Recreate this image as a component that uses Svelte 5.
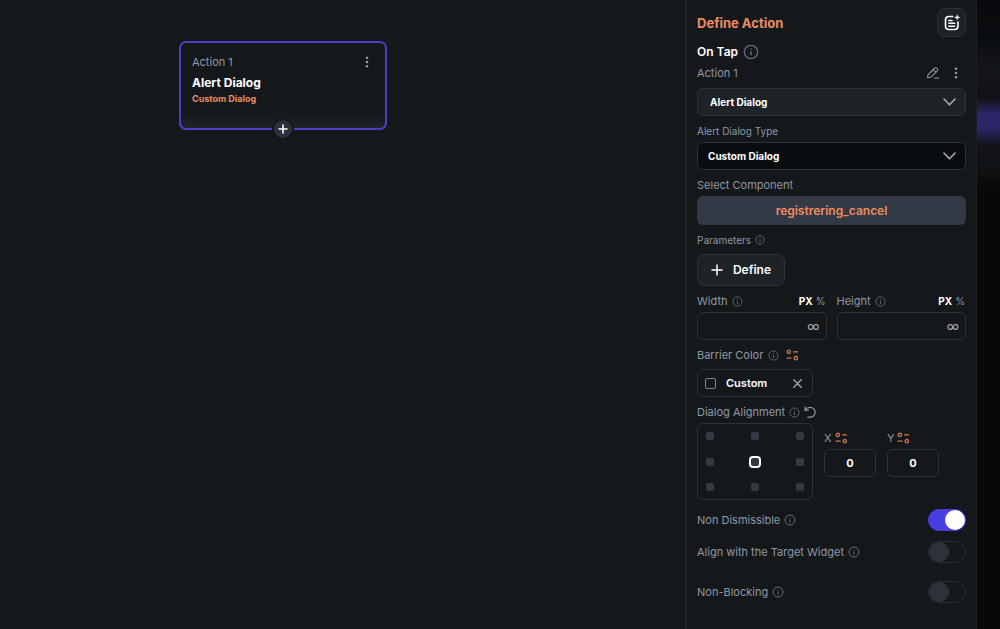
<script>
  let actionType = $state('Alert Dialog');
  let dialogType = $state('Custom Dialog');
  let alignment = $state('center');

  const positions = [
    'top left', 'top center', 'top right',
    'center left', 'center', 'center right',
    'bottom left', 'bottom center', 'bottom right'
  ];

  const sizes = [
    { id: 'width', label: 'Width' },
    { id: 'height', label: 'Height' }
  ];

  let offsets = $state([
    { id: 'x', label: 'X', value: '0' },
    { id: 'y', label: 'Y', value: '0' }
  ]);

  let toggles = $state([
    { id: 'dismiss', label: 'Non Dismissible', on: true },
    { id: 'target', label: 'Align with the Target Widget', on: false },
    { id: 'blocking', label: 'Non-Blocking', on: false }
  ]);
</script>

{#snippet info(size)}
  <svg class="info" width={size} height={size} viewBox="0 0 12 12" fill="none" stroke="currentColor" aria-hidden="true">
    <circle cx="6" cy="6" r="5" stroke-width="1" />
    <path d="M6 5.4V8.6M6 3.3V4.3" stroke-width="1.1" />
  </svg>
{/snippet}

{#snippet dots()}
  <svg width="4" height="12" viewBox="0 0 4 12" fill="currentColor" aria-hidden="true">
    <circle cx="2" cy="1.8" r="1.3" />
    <circle cx="2" cy="6" r="1.3" />
    <circle cx="2" cy="10.2" r="1.3" />
  </svg>
{/snippet}

{#snippet chevron()}
  <svg class="chevron" width="13" height="8" viewBox="0 0 13 8" fill="none" stroke="currentColor" stroke-width="1.6" stroke-linecap="round" stroke-linejoin="round" aria-hidden="true">
    <path d="M1 1L6.5 6.8L12 1" />
  </svg>
{/snippet}

{#snippet variable()}
  <button class="icon-btn variable" aria-label="Set from variable">
    <svg width="13" height="12" viewBox="0 0 13 12" fill="none" stroke="currentColor" stroke-width="1.3" aria-hidden="true">
      <circle cx="2.8" cy="2.8" r="1.7" />
      <path d="M7 2.8H12M0.6 9.2H5.6" />
      <circle cx="9.8" cy="9.2" r="1.7" />
    </svg>
  </button>
{/snippet}

<div class="editor">
  <main class="canvas">
    <div class="node">
      <div class="node-top">
        <span class="node-index">Action 1</span>
        <button class="icon-btn" aria-label="Node options">{@render dots()}</button>
      </div>
      <strong class="node-title">Alert Dialog</strong>
      <span class="node-type">Custom Dialog</span>
      <button class="add" aria-label="Add action">
        <svg width="10" height="10" viewBox="0 0 10 10" stroke="currentColor" stroke-width="1.6" stroke-linecap="round" aria-hidden="true">
          <path d="M5 1V9M1 5H9" />
        </svg>
      </button>
    </div>
  </main>

  <aside class="panel">
    <header class="panel-header">
      <h1>Define Action</h1>
      <button class="note-btn" aria-label="Add note">
        <svg width="18" height="18" viewBox="0 0 18 18" fill="none" stroke="currentColor" stroke-width="1.6" stroke-linecap="round" stroke-linejoin="round" aria-hidden="true">
          <path d="M9.6 2.5H6C3.6 2.5 2.5 3.6 2.5 6V12C2.5 14.4 3.6 15.5 6 15.5H11.5C13.9 15.5 15 14.4 15 12V8" />
          <path d="M5.8 6.4H9M5.8 9.3H11.8M5.8 12.2H11.8" stroke-width="1.5" />
          <path d="M14.2 0.2L15 2.6L17.4 3.4L15 4.2L14.2 6.6L13.4 4.2L11 3.4L13.4 2.6Z" fill="currentColor" stroke="none" />
        </svg>
      </button>
    </header>

    <div class="trigger">On Tap {@render info(16)}</div>

    <div class="action-row">
      <label for="action">Action 1</label>
      <button class="icon-btn" aria-label="Rename action">
        <svg width="14" height="14" viewBox="0 0 14 14" fill="none" stroke="currentColor" stroke-width="1.1" stroke-linecap="round" stroke-linejoin="round" aria-hidden="true">
          <path d="M1.6 11.6L2 8.9L8.2 2.5C9.2 1.5 10.2 1.5 11.1 2.3C12 3.2 12 4.2 11.1 5.1L4.6 11.3Z" />
          <path d="M7.2 3.6L9.9 6.3M8.5 12H12.8" />
        </svg>
      </button>
      <button class="icon-btn" aria-label="Action options">{@render dots()}</button>
    </div>
    <div class="select raised">
      <select id="action" bind:value={actionType}>
        <option>Alert Dialog</option>
        <option>Bottom Sheet</option>
      </select>
      {@render chevron()}
    </div>

    <div class="field">
      <label class="label small" for="dialog-type">Alert Dialog Type</label>
      <div class="select sunken">
        <select id="dialog-type" bind:value={dialogType}>
          <option>Custom Dialog</option>
          <option>Informational Dialog</option>
        </select>
        {@render chevron()}
      </div>
    </div>

    <div class="field">
      <span class="label">Select Component</span>
      <button class="component">registrering_cancel</button>
    </div>

    <div class="field roomy">
      <span class="label small">Parameters {@render info(10)}</span>
      <button class="define">
        <svg width="12" height="12" viewBox="0 0 12 12" stroke="currentColor" stroke-width="1.5" stroke-linecap="round" aria-hidden="true">
          <path d="M6 1V11M1 6H11" />
        </svg>
        Define
      </button>
    </div>

    <div class="sizes">
      {#each sizes as size}
        <div class="field">
          <div class="label">
            <label for={size.id}>{size.label}</label>
            {@render info(11)}
            <span class="units">
              <button class="unit active">PX</button>
              <button class="unit">%</button>
            </span>
          </div>
          <input class="size-input" id={size.id} type="text" placeholder="∞" />
        </div>
      {/each}
    </div>

    <div class="field roomy">
      <span class="label">Barrier Color <span class="label-icons">{@render info(11)} {@render variable()}</span></span>
      <div class="color">
        <button class="color-pick"><span class="swatch"></span>Custom</button>
        <button class="icon-btn" aria-label="Clear color">
          <svg width="9" height="9" viewBox="0 0 9 9" stroke="currentColor" stroke-width="1.3" stroke-linecap="round" aria-hidden="true">
            <path d="M0.8 0.8L8.2 8.2M8.2 0.8L0.8 8.2" />
          </svg>
        </button>
      </div>
    </div>

    <div class="field">
      <span class="label">
        Dialog Alignment {@render info(11)}
        <button class="icon-btn" aria-label="Reset alignment">
          <svg width="12" height="12" viewBox="0 0 12 12" fill="none" stroke="currentColor" stroke-width="1.2" stroke-linecap="round" stroke-linejoin="round" aria-hidden="true">
            <path d="M1 0.8V4.2H4.4" />
            <path d="M1.2 4C2.4 2.2 4.2 1.4 6.2 1.4C9 1.4 11.2 3.6 11.2 6.3C11.2 9.1 9 11.2 6.2 11.2H3.8" />
          </svg>
        </button>
      </span>
      <div class="alignment">
        <div class="anchors" role="radiogroup" aria-label="Dialog Alignment">
          {#each positions as position}
            <input type="radio" name="alignment" value={position} aria-label={position} bind:group={alignment} />
          {/each}
        </div>
        {#each offsets as offset}
          <div class="field">
            <div class="label offset-label">
              <label for={offset.id}>{offset.label}</label>
              {@render variable()}
            </div>
            <input class="offset-input" id={offset.id} type="text" bind:value={offset.value} />
          </div>
        {/each}
      </div>
    </div>

    <div class="toggles">
      {#each toggles as toggle}
        <div class="toggle-row">
          <label for={toggle.id}>{toggle.label}</label>
          {@render info(12)}
          <input class="switch" id={toggle.id} type="checkbox" role="switch" bind:checked={toggle.on} />
        </div>
      {/each}
    </div>
  </aside>

  <div class="backdrop"></div>
</div>

<style>
  :global(body) {
    margin: 0;
    background: #14181b;
  }

  .editor {
    display: grid;
    grid-template-columns: 1fr 292px 23px;
    min-height: 100vh;
    background: #14181b;
    color: #8e98a6;
    font-family: Inter, "Open Sans", sans-serif;
    font-size: 11px;
    line-height: 16px;
  }

  .editor * {
    box-sizing: border-box;
  }

  button,
  input,
  select {
    margin: 0;
    padding: 0;
    border: none;
    background: none;
    color: inherit;
    font: inherit;
  }

  button,
  select {
    cursor: pointer;
  }

  svg {
    display: block;
    flex: none;
  }

  .icon-btn {
    display: flex;
    align-items: center;
  }

  .info {
    color: #626c78;
  }

  .canvas {
    position: relative;
  }

  .node {
    position: absolute;
    top: 41px;
    left: 179px;
    display: flex;
    flex-direction: column;
    width: 208px;
    height: 89px;
    padding: 11px;
    border: 2px solid #4841c4;
    border-radius: 7px;
    background: linear-gradient(#14181b 80%, #1e2429);
  }

  .node-top {
    display: flex;
    justify-content: space-between;
    align-items: center;
    padding-right: 5px;
  }

  .node-title {
    margin-top: 5px;
    color: #fff;
    font-size: 12px;
    font-weight: 700;
  }

  .node-type {
    color: #ee8b60;
    font-size: 9px;
    font-weight: 700;
  }

  .add {
    position: absolute;
    bottom: -12px;
    left: 50%;
    display: grid;
    place-items: center;
    width: 22px;
    height: 22px;
    border: 2px solid #14181b;
    border-radius: 50%;
    background: #2b323b;
    color: #fff;
    transform: translateX(-50%);
  }

  .panel {
    padding: 8px 10px 24px 10px;
    border-left: 2px solid #22272c;
    border-right: 1px solid #1b1f23;
  }

  .panel-header {
    display: flex;
    justify-content: space-between;
    align-items: center;
  }

  h1 {
    margin: 0;
    color: #ee8b60;
    font-size: 13px;
    font-weight: 700;
  }

  .note-btn {
    display: grid;
    place-items: center;
    width: 29px;
    height: 29px;
    border: 1px solid #293036;
    border-radius: 7px;
    background: #1d2327;
    color: #fff;
  }

  .trigger {
    display: flex;
    align-items: center;
    gap: 5px;
    margin-top: 5px;
    color: #fff;
    font-size: 12px;
    font-weight: 600;
    line-height: 20px;
  }

  .action-row {
    display: flex;
    align-items: center;
    gap: 14px;
    height: 22px;
    margin-bottom: 4px;
    padding-right: 8px;
  }

  .action-row label {
    flex: 1;
  }

  .select {
    display: grid;
    align-items: center;
    height: 28px;
    border: 1px solid #2b3238;
    border-radius: 6px;
    color: #a2abb6;
  }

  .select select {
    grid-area: 1 / 1;
    width: 100%;
    height: 26px;
    appearance: none;
    outline: none;
    color: #fff;
    font-size: 10px;
    font-weight: 700;
  }

  .select option {
    background: #14181b;
  }

  .chevron {
    grid-area: 1 / 1;
    justify-self: end;
    margin-right: 9px;
    pointer-events: none;
  }

  .raised {
    background: #1d2327;
  }

  .raised select {
    padding-left: 12px;
  }

  .sunken {
    background: #090d10;
  }

  .sunken select {
    padding-left: 10px;
  }

  .field {
    display: flex;
    flex-direction: column;
    gap: 3px;
    margin-top: 7px;
  }

  .roomy {
    gap: 6px;
  }

  .label {
    display: flex;
    align-items: center;
    gap: 4px;
    height: 16px;
  }

  .small {
    font-size: 10px;
  }

  .label-icons {
    display: flex;
    align-items: center;
    gap: 7px;
    margin-left: 1px;
  }

  .variable {
    color: #c97857;
  }

  .component {
    height: 29px;
    border-radius: 6px;
    background: #323a45;
    color: #ee8b60;
    font-size: 12px;
    font-weight: 600;
  }

  .define {
    display: flex;
    align-items: center;
    justify-content: center;
    align-self: flex-start;
    gap: 10px;
    width: 88px;
    height: 32px;
    border: 1px solid #2b3238;
    border-radius: 7px;
    background: #1d2327;
    color: #fff;
    font-size: 12px;
    font-weight: 600;
  }

  .sizes {
    display: grid;
    grid-template-columns: 1fr 1fr;
    gap: 10px;
  }

  .units {
    display: flex;
    gap: 3px;
    margin-left: auto;
    padding-right: 1px;
    font-size: 10px;
  }

  .active {
    color: #fff;
    font-weight: 700;
  }

  .size-input,
  .offset-input {
    height: 28px;
    border: 1px solid #2b3238;
    border-radius: 6px;
    outline: none;
  }

  .size-input {
    width: 100%;
    padding: 0 6px;
    font-size: 13px;
    text-align: right;
  }

  .size-input::placeholder {
    color: #a2abb6;
    opacity: 1;
  }

  .color {
    display: flex;
    align-items: center;
    justify-content: space-between;
    width: 116px;
    height: 28px;
    padding: 0 10px 0 7px;
    border: 1px solid #2b3238;
    border-radius: 6px;
    color: #a2abb6;
  }

  .color-pick {
    display: flex;
    align-items: center;
    gap: 10px;
    color: #fff;
    font-weight: 600;
  }

  .swatch {
    width: 11px;
    height: 11px;
    border: 1px solid #7c8590;
    border-radius: 2px;
  }

  .alignment {
    display: flex;
    align-items: flex-start;
    gap: 11px;
  }

  .anchors {
    display: grid;
    grid-template-columns: repeat(3, 8px);
    justify-content: space-between;
    align-content: space-between;
    width: 116px;
    height: 77px;
    padding: 8px;
    border: 1px solid #2b3238;
    border-radius: 6px;
  }

  .anchors input {
    width: 8px;
    height: 8px;
    appearance: none;
    border-radius: 2px;
    background: #323a45;
  }

  .anchors input:checked {
    outline: 2px solid #fff;
  }

  .offset-label {
    gap: 3px;
  }

  .offset-input {
    width: 52px;
    color: #fff;
    font-weight: 700;
    text-align: center;
  }

  .toggles {
    margin-top: 9px;
  }

  .toggle-row {
    display: flex;
    align-items: center;
    gap: 4px;
    height: 22px;
    margin-bottom: 10px;
  }

  .toggle-row:last-child {
    margin-top: 18px;
  }

  .switch {
    width: 38px;
    height: 22px;
    margin-left: auto;
    padding: 0;
    appearance: none;
    border: 1px solid #262c32;
    border-radius: 11px;
    cursor: pointer;
  }

  .switch::before {
    content: "";
    display: block;
    width: 20px;
    height: 20px;
    border-radius: 50%;
    background: #2b323b;
  }

  .switch:checked {
    border-color: #473fe0;
    background: #473fe0;
  }

  .switch:checked::before {
    margin-left: auto;
    background: #fff;
  }

  .backdrop {
    background: linear-gradient(
      #08090c,
      #0b0e10 40px,
      #14161d 70px,
      #101216 98px,
      #2b2768 114px,
      #2b2768 128px,
      #111316 146px,
      #111416 165px,
      #07080a 190px
    );
  }
</style>
